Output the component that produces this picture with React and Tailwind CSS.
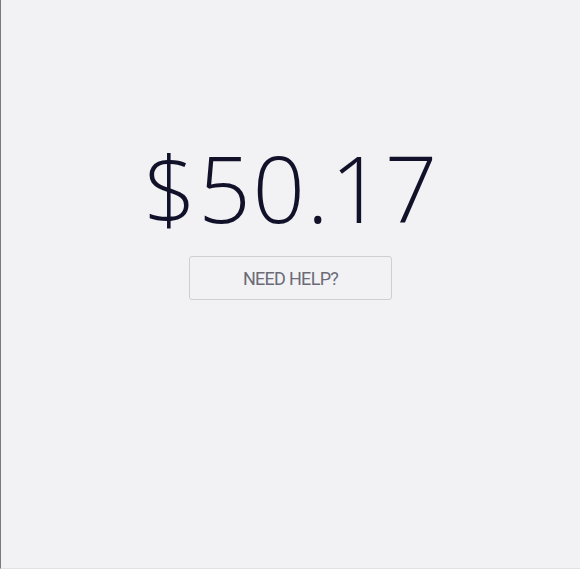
import React from 'react';

const App = () => {
  return (
    <div className="w-[580px] h-[580px] bg-white">
      <div className="h-[569px] bg-[#f2f2f4] border-l border-l-[#7a7a7a] border-b border-b-[#e2e2e4] flex flex-col items-center pt-[128px]">
        <div className="text-[92px] leading-[120px] font-light text-[#11112a] font-['Open_Sans',sans-serif] tracking-[1.8px] pl-[2px]">
          $50.17
        </div>
        <button className="mt-[8px] w-[203px] h-[44px] border border-[#cfcfd3] rounded-[3px] bg-[#f2f2f4] text-[18px] text-[#6b6b78] font-['Roboto',sans-serif] tracking-[-0.7px]">
          NEED HELP?
        </button>
      </div>
    </div>
  );
};

export default App;
